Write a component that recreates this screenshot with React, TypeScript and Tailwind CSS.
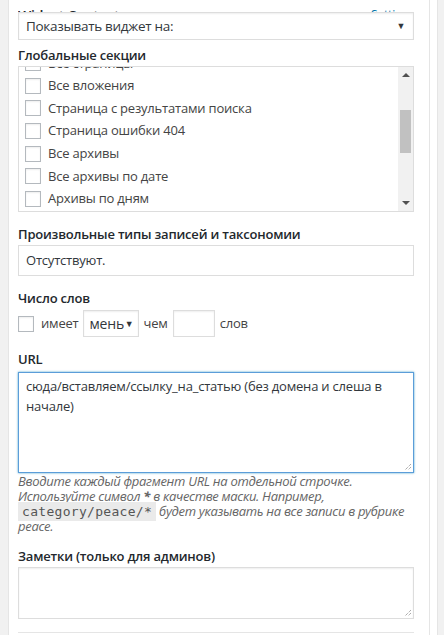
import React from 'react';

const items = [
  'Все страницы',
  'Все вложения',
  'Страница с результатами поиска',
  'Страница ошибки 404',
  'Все архивы',
  'Все архивы по дате',
  'Архивы по дням',
];

const Box = ({ className = '' }: { className?: string }) => (
  <span className={`inline-block h-4 w-4 shrink-0 border border-[#b4b9be] bg-white shadow-[inset_0_1px_2px_rgba(0,0,0,0.07)] ${className}`} />
);

const Grip = () => (
  <svg className="absolute bottom-[1px] right-[1px]" width="8" height="8" viewBox="0 0 8 8">
    <path d="M7 1L1 7M7 4L4 7" stroke="#888" strokeWidth="1" strokeDasharray="1 1" />
  </svg>
);

const Label = ({ children, className = '' }: { children: React.ReactNode; className?: string }) => (
  <div className={`text-[13px] font-semibold leading-[18px] tracking-[-0.2px] text-[#23282d] ${className}`}>{children}</div>
);

export default function App() {
  return (
    <div className="flex h-[635px] w-[444px] overflow-hidden bg-[#f1f1f1] font-['Open_Sans','Noto_Sans',sans-serif] text-[13px] tracking-[-0.2px] text-[#444]">
      <div className="w-[9px] shrink-0 border-r border-[#e5e5e5] bg-[#f1f1f1]" />
      <div className="relative w-[421px] shrink-0 border-r border-[#e5e5e5] bg-white pl-[9px] pr-[15px]">
        <div className="flex h-[12px] items-end justify-between overflow-hidden">
          <span className="translate-y-[14px] text-[14px] font-semibold text-[#23282d]">Widget Context</span>
          <span className="translate-y-[12px] text-[12px] text-[#0073aa] underline">Settings</span>
        </div>

        <div className="flex h-[28px] items-center justify-between border border-[#ddd] bg-white pl-[7px] pr-[8px] text-[13px] tracking-[-0.3px] text-[#32373c] shadow-[inset_0_1px_2px_rgba(0,0,0,0.07)]">
          <span className="text-[13.5px]">Показывать виджет на:</span>
          <span className="text-[9px]">▼</span>
        </div>

        <Label className="mt-[6px]">Глобальные секции</Label>
        <div className="relative mt-[2px] flex h-[146px] border border-[#ddd]">
          <div className="flex-1 overflow-hidden">
            <div className="-mt-[15px] flex flex-col">
              {items.map((t) => (
                <div key={t} className="flex h-[22.6px] items-center gap-[7px] pl-[6px]">
                  <Box />
                  <span>{t}</span>
                </div>
              ))}
            </div>
          </div>
          <div className="relative w-[15px] bg-[#f1f1f1]">
            <span className="absolute left-[4px] top-[6px] h-0 w-0 border-x-[4px] border-b-[4px] border-x-transparent border-b-[#505050]" />
            <div className="absolute left-[2px] top-[43px] h-[43px] w-[11px] bg-[#c1c1c1]" />
            <span className="absolute bottom-[6px] left-[4px] h-0 w-0 border-x-[4px] border-t-[4px] border-x-transparent border-t-[#505050]" />
          </div>
        </div>

        <Label className="mt-[13px]">Произвольные типы записей и таксономии</Label>
        <div className="mt-[2px] flex h-[31px] items-center border border-[#ddd] px-[7px] text-[#32373c]">Отсутствуют.</div>

        <Label className="mt-[13px]">Число слов</Label>
        <div className="mt-[3px] flex h-[27px] items-center">
          <Box />
          <span className="ml-[7px]">имеет</span>
          <div className="ml-[4px] flex h-[27px] w-[56px] items-center overflow-hidden border border-[#ddd] pl-[6px] pr-[4px] text-[14px] text-[#32373c] shadow-[inset_0_1px_2px_rgba(0,0,0,0.07)]">
            <span className="w-[34px] overflow-hidden whitespace-nowrap">меньше</span>
            <span className="ml-auto text-[9px]">▼</span>
          </div>
          <span className="ml-[5px]">чем</span>
          <div className="ml-[5px] h-[27px] w-[42px] border border-[#ddd] shadow-[inset_0_1px_2px_rgba(0,0,0,0.07)]" />
          <span className="ml-[5px]">слов</span>
        </div>

        <Label className="mt-[13px]">URL</Label>
        <div className="relative mt-[4px] h-[101px] border border-[#5b9dd9] px-[7px] py-[3px] leading-[20px] text-[#32373c] shadow-[0_0_2px_rgba(30,140,190,0.8)]">
          сюда/вставляем/ссылку_на_статью (без домена и слеша в начале)
          <Grip />
        </div>
        <p className="mt-[1px] whitespace-nowrap text-[13px] italic leading-[15px] tracking-[-0.3px] text-[#666]">
          Вводите каждый фрагмент URL на отдельной строчке.
          <br />
          Используйте символ <b>*</b> в качестве маски. Например,
          <br />
          <code className="bg-[#eaeaea] px-[4px] py-[2px] font-['DejaVu_Sans_Mono',monospace] text-[13px] not-italic tracking-[0.3px] text-[#555]">category/peace/*</code>{' '}
          будет указывать на все записи в рубрике
          <br />
          peace.
        </p>

        <Label className="mt-[13px]">Заметки (только для админов)</Label>
        <div className="relative mt-[2px] h-[52px] border border-[#ddd] shadow-[inset_0_1px_2px_rgba(0,0,0,0.07)]">
          <Grip />
        </div>
        <div className="mt-[13px] border-t border-[#e5e5e5]" />
      </div>
      <div className="w-[7px] shrink-0 bg-white" />
      <div className="flex-1 border-l border-[#e5e5e5] bg-[#f1f1f1]" />
    </div>
  );
}
